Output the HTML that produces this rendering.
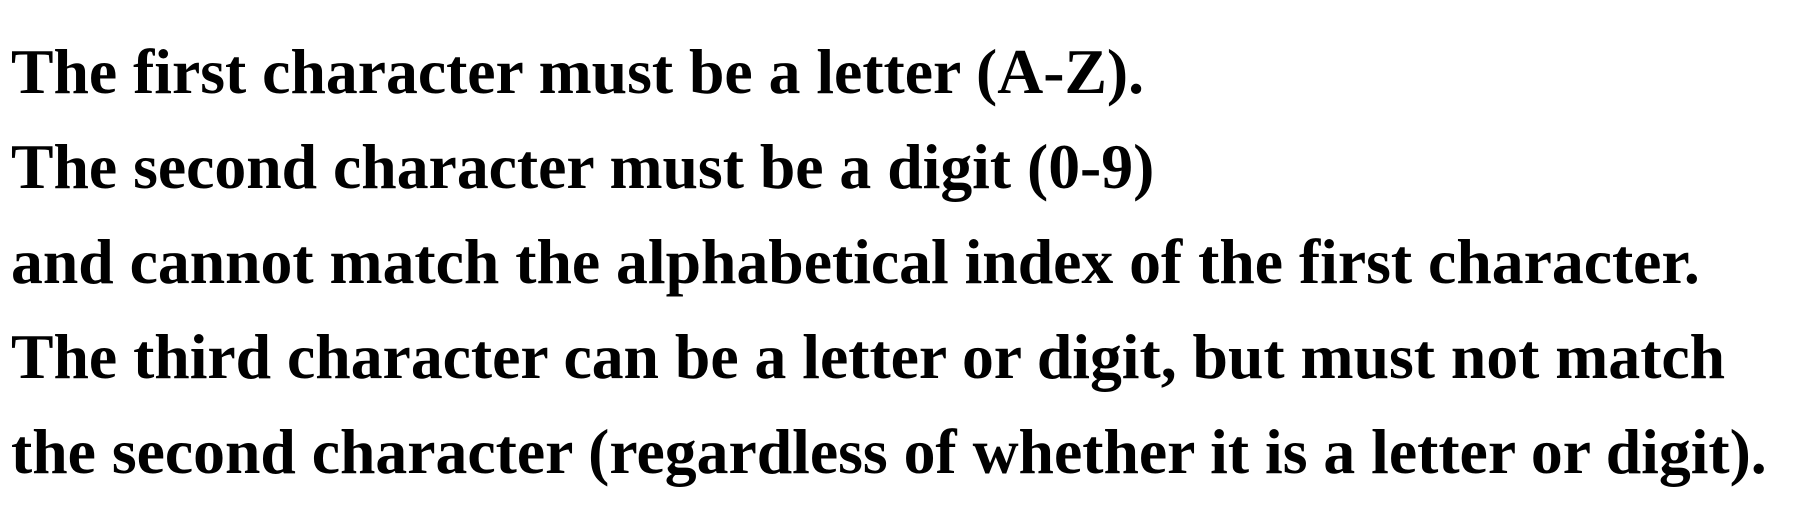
<!DOCTYPE html>
<html><head><meta charset="utf-8"><style>
html,body{margin:0;padding:0;background:#fff;width:1808px;height:528px;overflow:hidden}
.t{position:absolute;left:11px;top:24px;font-family:"Liberation Serif",serif;font-weight:bold;font-size:63.7px;line-height:95px;color:#000;white-space:nowrap}
</style></head><body>
<div class="t">The first character must be a letter (A-Z).<br>The second character must be a digit (0-9)<br>and cannot match the alphabetical index of the first character.<br>The third character can be a letter or digit, but must not match<br>the second character (regardless of whether it is a letter or digit).</div>
</body></html>
